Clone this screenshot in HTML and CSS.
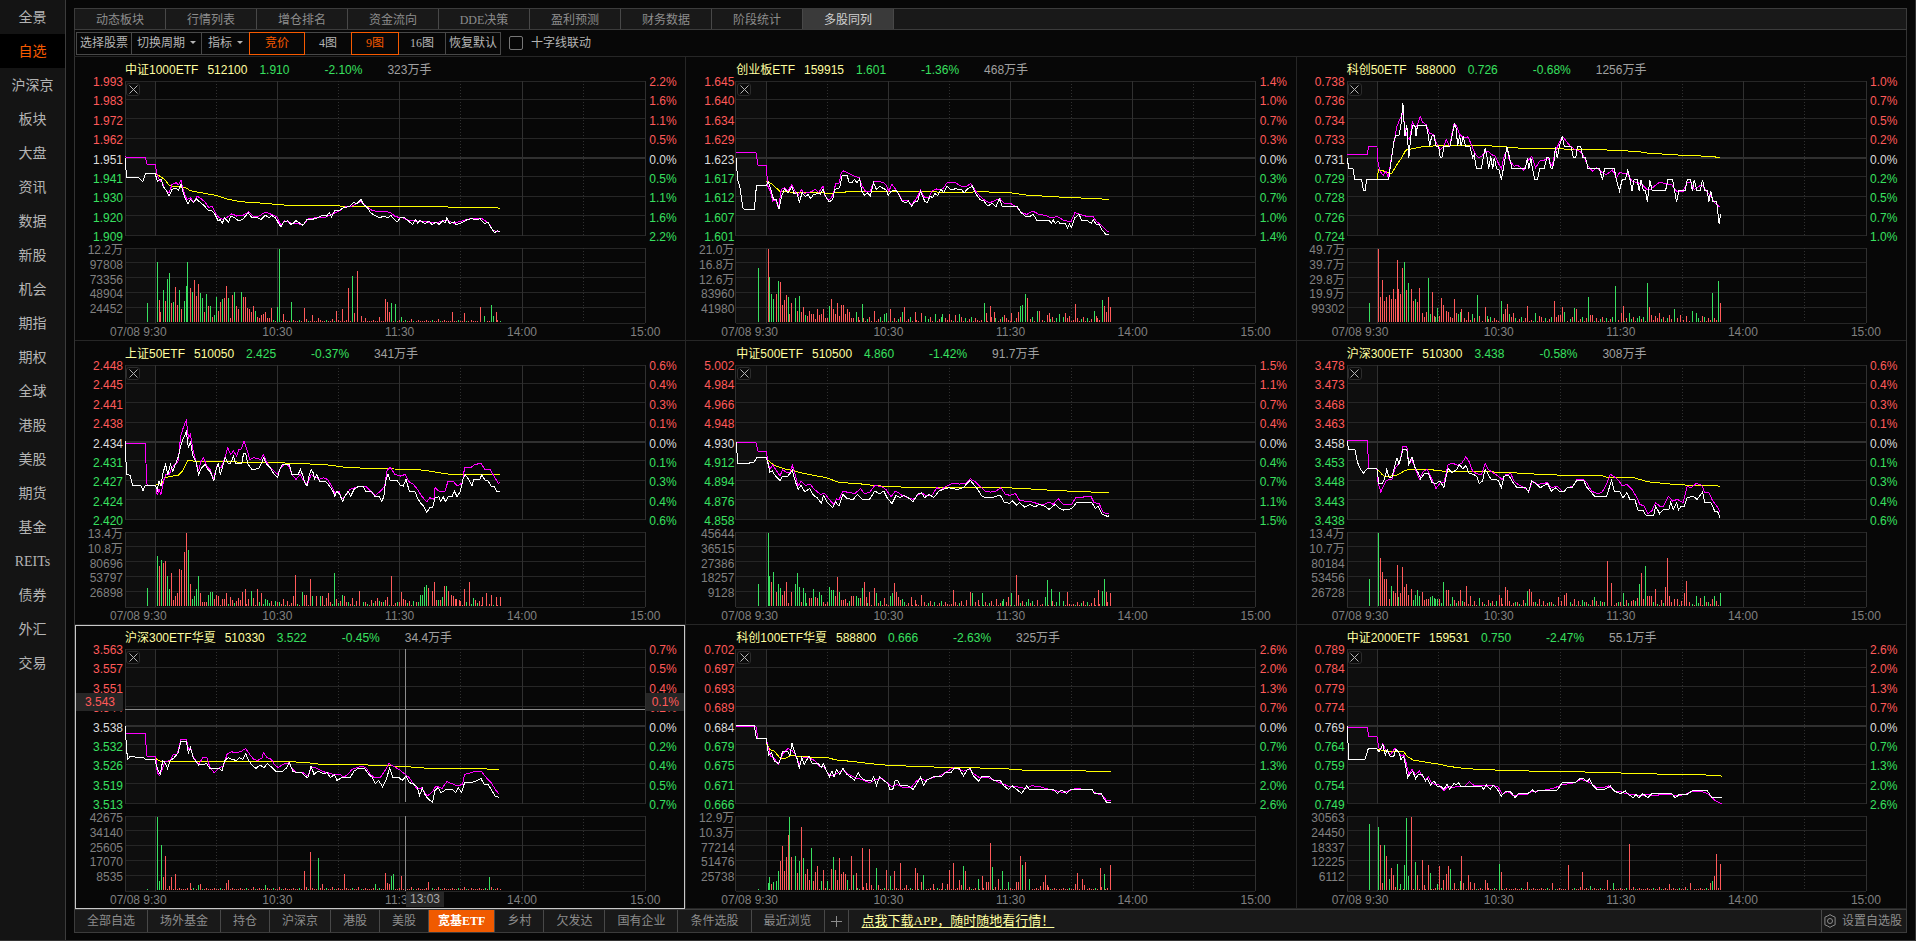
FILE: index.html
```
<!DOCTYPE html>
<html lang="zh-CN">
<head>
<meta charset="utf-8">
<title>多股同列</title>
<link rel="stylesheet" href="styles.css">
</head>
<body>
<div class="app">
  <nav class="side">
    <a href="#">全景</a>
    <a href="#" class="current">自选</a>
    <a href="#">沪深京</a>
    <a href="#">板块</a>
    <a href="#">大盘</a>
    <a href="#">资讯</a>
    <a href="#">数据</a>
    <a href="#">新股</a>
    <a href="#">机会</a>
    <a href="#">期指</a>
    <a href="#">期权</a>
    <a href="#">全球</a>
    <a href="#">港股</a>
    <a href="#">美股</a>
    <a href="#">期货</a>
    <a href="#">基金</a>
    <a href="#">REITs</a>
    <a href="#">债券</a>
    <a href="#">外汇</a>
    <a href="#">交易</a>
  </nav>
  <main class="main">
    <div class="tabs">
      <button type="button">动态板块</button>
      <button type="button">行情列表</button>
      <button type="button">增仓排名</button>
      <button type="button">资金流向</button>
      <button type="button">DDE决策</button>
      <button type="button">盈利预测</button>
      <button type="button">财务数据</button>
      <button type="button">阶段统计</button>
      <button type="button" class="current">多股同列</button>
    </div>
    <div class="tools">
      <button type="button" class="w4">选择股票</button>
      <button type="button" class="menu w5" aria-haspopup="true">切换周期</button>
      <button type="button" class="menu w3" aria-haspopup="true">指标</button>
      <button type="button" class="w4 on">竞价</button>
      <button type="button" class="w3">4图</button>
      <button type="button" class="w3 on">9图</button>
      <button type="button" class="w3">16图</button>
      <button type="button" class="w4">恢复默认</button>
      <label class="link-cross"><input type="checkbox">十字线联动</label>
    </div>
    <div class="panels" id="panels"></div>
    <div class="groups">
      <button type="button">全部自选</button>
      <button type="button">场外基金</button>
      <button type="button">持仓</button>
      <button type="button">沪深京</button>
      <button type="button">港股</button>
      <button type="button">美股</button>
      <button type="button" class="current">宽基ETF</button>
      <button type="button">乡村</button>
      <button type="button">欠发达</button>
      <button type="button">国有企业</button>
      <button type="button">条件选股</button>
      <button type="button">最近浏览</button>
      <button type="button" class="add" aria-label="添加">
        <svg width="11" height="11" viewBox="0 0 11 11"><path d="M5.5 0v11M0 5.5h11"/></svg>
      </button>
      <a class="promo" href="#">点我下载APP，随时随地看行情！</a>
      <button type="button" class="setup">
        <svg width="14" height="14" viewBox="0 0 14 14"><path d="M7 .6l2.200 1.300 2.900 1.300v7.600l-2.900 1.300L7 13.400l-2.200-1.300-2.900-1.300V3.200l2.900-1.300z"/><circle cx="7" cy="7" r="2.500"/></svg>
        设置自选股
      </button>
    </div>
  </main>
</div>
<script src="charts.js"></script>
</body>
</html>
```

FILE: styles.css
```
* { box-sizing: border-box; }

body {
  margin: 0;
  background: #070707;
  color: #b4b4b4;
  font: 12px/14px "Liberation Serif", "Noto Sans CJK SC", serif;
}

button {
  margin: 0;
  padding: 0;
  border: 0;
  background: none;
  color: inherit;
  font: inherit;
  white-space: nowrap;
  cursor: pointer;
}

a { color: inherit; text-decoration: none; }

.app {
  display: flex;
  height: 100vh;
  min-height: 740px;
  border-right: 1px solid #333;
  border-bottom: 1px solid #333;
}

/* left navigation */
.side {
  flex: none;
  width: 66px;
  background: #141414;
  border-right: 1px solid #3c3c3c;
}
.side a {
  display: flex;
  align-items: center;
  justify-content: center;
  height: 34px;
  padding-top: 2px;
  font-size: 14px;
}
.side .current { background: #000; color: #f75a00; }

.main {
  flex: 1;
  min-width: 0;
  display: flex;
  flex-direction: column;
  padding: 8px 8px 7px;
}

/* top tabs */
.tabs {
  display: flex;
  flex: none;
  height: 22px;
  border: 1px solid #3c3c3c;
  background: #191919;
  color: #8c8c8c;
}
.tabs button { width: 91px; padding-top: 2px; border-right: 1px solid #484848; }
.tabs .current { background: #3a3a3a; color: #d0d0d0; }

/* toolbar */
.tools {
  display: flex;
  flex: none;
  align-items: center;
  height: 26px;
  padding-left: 1px;
  border-left: 1px solid #333;
  border-right: 1px solid #333;
}
.tools button {
  height: 23px;
  margin-right: -1px;
  border: 1px solid #484848;
}
.tools .on { position: relative; border-color: #f75a00; color: #f75a00; }
.w3 { width: 48px; }
.w4 { width: 56px; }
.w5 { width: 71px; }
.tools .menu.w3 { width: 49px; }
.menu::after {
  content: "";
  display: inline-block;
  margin-left: 5px;
  vertical-align: 3px;
  border: 3px solid transparent;
  border-top-color: #b4b4b4;
  border-bottom: 0;
}
.link-cross { display: flex; align-items: center; gap: 8px; margin-left: 9px; }
.link-cross input {
  appearance: none;
  width: 14px;
  height: 14px;
  margin: 0;
  border: 1px solid #777;
  border-radius: 2px;
}
.link-cross input:checked { background: #f75a00; }

/* chart panels */
.panels {
  flex: 1;
  display: grid;
  grid-template-columns: repeat(3, 1fr);
  grid-template-rows: repeat(3, 1fr);
  border: 1px solid #262626;
  border-bottom: 0;
  border-left-color: #333;
  border-right-color: #333;
  font-family: "Liberation Sans", "Noto Sans CJK SC", sans-serif;
}
.panel {
  display: grid;
  grid-template-columns: 50px 1fr 40px;
  grid-template-rows: 24px 155fr 12px 75fr 17px;
  min-width: 0;
  border-left: 1px solid #262626;
  border-bottom: 1px solid #262626;
}
.panel:nth-child(3n + 1) { border-left: 0; }
.panel.selected { outline: 1px solid #c8c8c8; outline-offset: -1px; border-bottom-color: #c8c8c8; }

.quote {
  grid-column: 2 / 4;
  display: flex;
  align-items: center;
  height: 26px;
  white-space: nowrap;
}
.quote .name, .quote .code { color: #ffffa0; }
.quote .name { margin-right: 9px; }
.quote .code { margin-right: 12px; }
.quote .price { width: 65px; color: #38e060; }
.quote .change { width: 63px; color: #38e060; }
.quote .volume { color: #a0a0a0; }

.scale {
  position: relative;
  display: flex;
  flex-direction: column;
  justify-content: space-between;
  margin: -6px 0 -8px;
  color: #38e060;
}
.scale.left { grid-column: 1; padding-right: 2px; text-align: right; }
.scale.right { padding-left: 4px; }
.scale .up { color: #ff5a5a; }
.scale .flat { color: #dcdcdc; }
.scale.amount { margin: -5px 0 7px; color: #808080; }

.plot { position: relative; min-width: 0; min-height: 0; }
.plot svg { display: block; position: absolute; inset: 0; width: 100%; height: 100%; overflow: visible; }
.plot.trade { grid-column: 2; grid-row: 4; }
.scale.amount { grid-row: 4; }

.plot svg * { vector-effect: non-scaling-stroke; shape-rendering: crispEdges; fill: none; stroke-width: 1px; }
.plot svg .early { fill: #0e0e0e; }
.plot svg .rule { stroke: #262626; }
.plot svg .hour { stroke: #303030; }
.plot svg .half { stroke: #303030; stroke-dasharray: 1 2; }
.plot svg .base { stroke: #303030; stroke-width: 2px; }
.plot svg .cross { stroke: #8c8c8c; }
.plot svg .lead { stroke: #ff00ff; }
.plot svg .mean { stroke: #ffff00; }
.plot svg .last { stroke: #ffffff; }
.plot svg .bar-up { stroke: #ff5a5a; }
.plot svg .bar-down { stroke: #38e060; }

.close {
  position: absolute;
  top: 2px;
  left: 1px;
  display: flex;
  align-items: center;
  justify-content: center;
  width: 14px;
  height: 13px;
  border: 1px solid #2c2c2c;
  border-radius: 3px;
  background: #0a0a0a;
}
.plot .close svg { position: static; width: 9px; height: 9px; }
.plot .close svg path { stroke: #b4b4b4; shape-rendering: auto; }

.times {
  grid-column: 2;
  grid-row: 5;
  position: relative;
  display: grid;
  grid-template-columns: 91fr 122fr 122fr 122fr 62fr;
  align-items: center;
  justify-items: center;
  padding-top: 1px;
  color: #808080;
  white-space: nowrap;
}
.times span:first-child { justify-self: start; margin-left: -15px; }
.times span:nth-child(5) { justify-self: end; margin-right: -15px; }

.tag {
  position: absolute;
  background: #262626;
  line-height: 18px;
}
.scale .tag { bottom: 60%; color: #ff5a5a; text-align: center; }
.scale.left .tag { left: 1px; width: 47px; padding-right: 8px; text-align: right; }
.scale.right .tag { right: 1px; width: 38px; }
.times .tag { left: 54%; top: 0; width: 38px; color: #a8a8a8; line-height: 16px; text-align: center; }

/* bottom groups */
.groups {
  display: flex;
  flex: none;
  height: 24px;
  border: 1px solid #3c3c3c;
  background: #191919;
  color: #8c8c8c;
}
.groups button { padding: 0 12px; border-right: 1px solid #484848; }
.groups .current { padding: 0 9px; background: #f05a00; color: #fff; font-weight: bold; }
.groups .add { padding: 0 6px; }
.groups svg { fill: none; stroke: #8c8c8c; }
.add svg { display: block; }
.promo {
  align-self: center;
  margin-left: 13px;
  color: #ffffa0;
  font-size: 13px;
  text-decoration: underline;
  text-underline-offset: 2px;
}
.groups .setup {
  display: flex;
  align-items: center;
  gap: 5px;
  margin-left: auto;
  padding: 0 4px 0 1px;
  border-right: 0;
  border-left: 1px solid #484848;
}
```

FILE: charts.js
```
// Each plot has its own unit box: left, top, width. Bars are "x:height", negative for a falling minute.
const panels = [
  {
    name: "中证1000ETF", code: "512100", price: "1.910", change: "-2.10%", volume: "323万手",
    prices: "1.993 1.983 1.972 1.962 1.951 1.941 1.930 1.920 1.909", rates: "2.2 1.6 1.1 0.5",
    amounts: "12.2万 97808 73356 48904 24452", box: [307, 244, 1272], hum: 1,
    lead: "307,470 311,475 357,475 361,495 381,495 386,530 392,543 398,548 405,570 415,580 422,555 432,550 438,556 444,543 450,575 458,600 467,595 475,608 483,590 493,598 503,608 512,625 520,620 530,645 537,655 545,660 555,655 568,643 580,650 595,648 610,637 620,650 635,650 650,638 665,645 678,652 688,678 697,665 715,672 730,673 742,678 755,658 775,655 795,655 812,645 830,635 845,622 862,620 875,612 884,606 895,620 910,632 925,637 955,638 968,652 985,655 1000,663 1015,665 1035,665 1055,670 1075,668 1094,662 1110,672 1130,665 1150,658 1180,658 1195,670 1205,690 1212,696 1222,696",
    mean: "381,523 395,532 405,542 415,558 430,562 455,564 465,573 485,578 530,588 560,600 590,607 650,612 715,619 860,620 950,622 1120,623 1224,626",
    last: "307,475 311,535 341,535 350,547 357,523 381,523 386,545 395,538 400,560 407,572 415,589 422,570 432,566 438,572 444,553 448,575 455,600 461,612 467,600 475,610 481,598 490,608 500,618 510,632 518,632 527,645 535,665 540,660 545,672 550,655 560,668 566,650 575,655 585,665 595,660 608,640 617,655 630,655 640,660 650,648 660,655 665,648 675,655 682,672 688,682 695,668 705,664 712,675 718,672 725,664 735,672 742,678 752,660 765,660 778,655 790,648 800,650 806,640 812,652 820,632 830,635 840,625 855,622 865,610 875,612 884,600 890,615 900,625 907,640 920,650 930,655 940,650 950,655 957,648 965,660 972,668 980,655 990,655 1000,665 1010,675 1018,660 1023,672 1028,662 1040,673 1050,665 1058,676 1067,668 1075,675 1083,665 1090,670 1094,655 1100,672 1112,668 1116,676 1130,670 1145,660 1155,658 1165,662 1175,658 1185,672 1195,670 1202,685 1210,700 1218,694 1224,698",
    bars: "361:-54 386:-177 391:63 395:30 400:-93 405:60 410:-126 415:-144 420:54 425:-57 430:102 435:48 440:-93 445:36 452:-60 457:-105 461:-177 466:99 471:-87 476:123 481:75 486:111 491:-84 496:-69 501:30 506:-81 511:45 516:-45 520:15 525:-21 530:-72 535:33 540:57 545:-66 550:69 555:105 560:-69 565:12 570:78 575:-87 580:45 585:36 591:-87 596:72 601:72 606:39 611:36 616:30 621:45 626:-33 631:15 636:12 641:21 646:24 650:30 655:12 660:12 665:39 680:-42 685:-216 695:24 714:-57 746:39 765:21 780:12 824:33 839:36 854:99 864:-135 869:27 876:150 885:18 895:12 930:15 944:66 949:57 954:30 959:-54 969:-51 983:-15 1108:30 1138:27 1175:42 1185:-18 1204:-48 1209:-18 1214:30 1224:-3"
  },
  {
    name: "创业板ETF", code: "159915", price: "1.601", change: "-1.36%", volume: "468万手",
    prices: "1.645 1.640 1.634 1.629 1.623 1.617 1.612 1.607 1.601", rates: "1.4 1.0 0.7 0.3",
    amounts: "21.0万 16.8万 12.6万 83960 41980", box: [138, 244, 1272], hum: 2,
    lead: "138,460 187,460 192,498 212,498 216,560 222,575 228,605 235,600 242,628 249,570 256,565 265,575 275,555 283,575 290,590 298,570 305,582 318,578 325,575 332,570 340,580 351,560 356,590 365,602 372,595 378,575 382,553 390,553 396,520 402,514 415,522 428,530 440,535 447,560 455,575 467,575 475,548 487,545 500,550 505,555 512,575 520,555 530,572 540,590 545,602 560,605 568,615 580,598 590,572 600,595 610,595 618,575 628,568 635,572 645,568 655,550 675,550 690,560 700,562 713,553 725,575 735,590 750,605 760,610 775,602 785,598 795,612 810,612 825,622 838,640 850,645 865,635 880,645 895,648 910,655 925,652 940,662 958,668 968,640 980,645 1000,652 1012,650 1020,665 1035,680 1047,695 1052,695",
    mean: "212,545 225,553 237,566 246,577 280,578 300,580 370,581 395,580 410,577 600,577 680,579 740,577 810,580 850,587 905,591 960,595 1020,597 1052,601",
    last: "138,475 142,540 147,560 155,625 160,631 183,631 188,559 212,559 217,548 222,565 230,600 237,600 243,630 250,590 257,568 265,580 275,562 280,582 287,580 293,608 300,580 308,592 315,585 321,598 328,585 340,582 345,585 351,570 357,590 366,608 375,600 380,570 386,568 392,565 398,527 410,527 415,548 423,548 428,540 434,550 441,538 446,575 453,588 460,580 467,590 475,550 482,570 490,560 500,568 505,570 511,588 518,575 530,572 537,585 545,605 553,610 560,605 568,620 575,608 583,605 590,575 600,605 607,610 613,590 620,595 625,582 632,588 640,570 647,580 655,560 665,572 675,568 690,570 697,580 705,568 717,560 725,582 735,600 745,605 755,620 765,612 775,622 783,598 790,620 827,622 835,638 848,652 857,652 866,645 875,663 905,663 910,672 915,662 920,673 927,665 932,673 945,673 950,685 955,675 960,684 968,655 978,645 985,663 1000,665 1008,672 1013,660 1020,675 1027,675 1035,693 1045,706 1052,706",
    bars: "192:-159 217:216 221:-132 226:-81 231:-66 236:81 241:-120 246:117 251:48 256:63 261:78 266:-72 270:24 275:54 283:-69 288:33 293:-75 298:30 303:42 308:-21 313:18 317:33 322:24 327:24 332:9 337:36 342:21 347:24 352:36 357:12 361:12 366:-45 371:66 376:36 381:24 386:54 391:18 396:48 401:48 406:24 411:36 416:30 422:12 427:12 432:-30 437:15 447:-51 477:33 502:-24 507:-27 516:36 545:-30 550:42 577:30 592:27 602:-18 626:-24 645:-24 660:24 675:21 685:-24 746:-54 751:27 761:45 771:30 795:21 814:27 829:30 834:-45 839:-48 846:-81 851:69 876:-33 881:33 900:21 905:27 931:-24 945:27 954:18 970:51 1015:-33 1020:18 1035:-63 1040:45 1045:30 1050:72 1055:42"
  },
  {
    name: "科创50ETF", code: "588000", price: "0.726", change: "-0.68%", volume: "1256万手",
    prices: "0.738 0.736 0.734 0.733 0.731 0.729 0.728 0.726 0.724", rates: "1.0 0.7 0.5 0.2",
    amounts: "49.7万 39.7万 29.8万 19.9万 99302", box: [121, 244, 1319], hum: 2,
    lead: "121,464 172,464 177,440 197,440 200,490 205,515 213,528 220,515 226,535 233,480 240,430 248,380 255,360 263,340 268,385 275,415 280,420 287,368 295,385 302,370 307,350 313,368 322,375 330,400 340,405 350,435 358,450 367,440 373,420 382,440 388,400 393,372 400,380 405,400 412,410 420,415 428,412 437,435 445,460 455,475 463,470 470,460 480,455 488,465 497,470 505,490 513,508 520,470 528,450 533,480 545,500 555,498 570,512 580,485 590,470 600,505 610,485 622,482 632,475 642,500 650,455 658,435 668,410 678,425 688,440 700,450 712,455 722,470 733,500 745,515 755,505 770,520 780,525 795,512 805,535 813,520 832,522 845,545 860,550 870,555 885,572 892,570 902,560 915,548 930,553 945,555 958,575 975,575 985,548 995,550 1003,570 1015,560 1024,558 1035,578 1045,590 1055,610 1068,623",
    mean: "197,541 201,510 215,515 235,522 245,500 260,475 270,452 290,447 320,440 390,438 440,438 510,440 545,445 610,448 740,449 860,456 885,461 970,467 1050,471 1068,475",
    last: "121,475 126,508 136,508 141,541 158,541 163,574 167,574 171,541 227,541 231,500 235,470 240,425 245,408 253,408 258,375 263,311 268,410 273,378 278,475 283,410 288,377 294,380 296,410 300,377 322,377 328,410 331,440 336,410 342,408 347,440 354,442 358,475 362,475 367,442 382,442 388,408 394,374 398,385 402,438 407,408 411,438 416,410 422,440 433,440 440,475 444,465 450,508 462,508 467,475 472,445 477,475 481,508 486,470 491,508 495,475 501,508 507,510 513,541 518,508 522,480 527,442 534,475 540,508 574,508 579,475 583,508 588,475 592,508 598,541 605,541 610,508 622,508 628,475 634,475 638,505 643,508 648,475 650,442 655,475 660,442 668,410 673,442 690,442 696,475 702,475 706,442 715,442 720,475 727,475 733,508 762,508 770,541 775,508 800,508 805,541 813,574 820,541 828,541 834,510 840,541 845,574 850,541 858,541 863,574 868,541 874,574 879,574 884,607 890,541 896,574 930,574 936,541 948,541 953,574 958,607 964,574 980,574 985,541 994,541 998,574 1003,541 1010,574 1018,574 1024,541 1030,574 1036,574 1040,607 1045,574 1050,607 1060,607 1063,640 1066,673 1070,645",
    bars: "177:-54 202:216 207:72 212:123 217:60 222:72 228:78 233:66 238:96 243:66 248:183 253:96 258:81 263:159 268:-177 273:93 278:-114 286:96 291:60 296:-66 301:57 306:99 312:27 317:15 322:30 327:-129 332:-24 337:87 342:18 347:-15 352:-39 357:18 362:69 367:48 373:33 378:30 388:12 393:66 398:27 403:-24 408:-30 413:36 429:30 439:-24 452:-78 457:18 472:42 477:-18 513:-60 518:24 523:36 528:51 533:-24 543:27 579:45 599:-27 610:18 648:60 653:15 658:21 663:21 668:42 674:-30 699:-39 704:36 734:-72 739:21 744:21 803:-105 818:27 823:45 838:-27 864:-18 884:-114 889:42 894:21 905:18 915:27 940:21 953:-36 969:21 984:18 999:-33 1009:-27 1024:18 1050:-84 1055:12 1060:6 1065:-120 1070:54"
  },
  {
    name: "上证50ETF", code: "510050", price: "2.425", change: "-0.37%", volume: "341万手",
    prices: "2.448 2.445 2.441 2.438 2.434 2.431 2.427 2.424 2.420", rates: "0.6 0.4 0.3 0.1",
    amounts: "13.4万 10.8万 80696 53797 26898", box: [160, 76, 1272], hum: 3,
    lead: "160,313 209,313 214,438 235,438 239,468 243,450 248,465 254,425 260,405 268,405 275,385 290,365 296,290 303,262 310,242 315,295 320,285 326,330 333,365 340,395 345,368 352,355 360,380 368,390 376,420 385,380 395,385 403,360 411,325 418,345 425,335 433,350 438,330 445,328 451,304 458,330 465,360 475,355 485,358 492,360 498,345 505,365 515,385 525,395 533,405 540,385 550,375 560,378 568,405 578,420 588,405 600,430 607,432 615,405 625,412 633,420 645,415 655,420 665,440 673,462 683,455 690,480 698,470 710,450 722,445 735,440 748,440 760,455 772,468 785,455 795,440 800,395 808,383 820,405 833,410 845,405 855,428 865,435 875,450 885,470 898,488 905,475 915,480 918,445 930,458 942,455 950,425 962,425 972,440 985,430 990,385 1005,385 1015,375 1030,372 1040,390 1052,390 1062,410 1073,432 1076,430",
    mean: "235,437 250,430 258,415 275,410 290,408 300,395 313,364 355,366 450,368 500,370 575,371 660,377 700,384 760,387 830,389 890,392 930,400 960,406 1076,406",
    last: "160,305 164,405 173,408 178,437 200,440 204,454 209,439 235,439 239,452 243,425 248,440 253,400 259,375 265,405 271,375 277,395 283,375 291,350 297,315 303,295 310,277 315,325 320,305 326,350 333,365 340,405 347,385 356,375 363,390 369,398 377,424 383,390 388,370 393,405 399,380 405,355 412,372 418,372 425,350 430,373 445,373 450,342 455,342 460,372 470,390 487,388 493,372 499,355 505,372 515,385 522,400 533,415 538,390 545,375 562,375 568,405 583,405 589,390 595,410 600,430 605,440 610,410 615,390 620,400 623,420 629,405 635,425 650,425 660,440 668,455 673,470 678,455 685,465 692,486 698,470 705,455 712,470 720,450 732,440 742,440 748,455 762,455 770,470 782,472 788,487 793,470 797,425 803,405 808,422 825,422 833,438 840,440 847,420 855,455 868,455 875,475 882,490 890,500 898,519 905,505 912,505 918,475 927,472 932,487 938,472 943,487 950,472 960,470 965,455 972,472 980,455 987,415 992,407 1000,420 1008,440 1013,420 1027,420 1032,407 1040,422 1048,425 1055,440 1062,440 1068,455 1076,455",
    bars: "214:-51 239:-147 244:117 249:-135 254:126 259:132 264:-87 268:-48 273:96 278:18 283:30 288:36 293:108 298:105 305:159 310:216 315:-165 320:63 325:-21 330:-30 335:-48 340:-87 345:36 350:12 355:12 360:12 365:-33 369:-39 374:-39 384:33 389:30 399:21 404:21 409:36 419:27 424:18 438:24 443:18 448:39 454:48 469:-42 474:24 484:48 494:36 504:-21 509:-18 572:30 577:90 594:-39 599:33 604:33 613:78 619:-30 629:30 638:-30 643:30 653:24 658:36 672:-96 677:21 692:-33 697:30 717:24 734:42 778:24 797:18 802:27 812:87 836:39 841:21 882:-33 887:-33 892:-54 898:-60 903:51 912:42 917:69 922:18 927:-18 937:-27 942:57 947:-57 952:42 957:33 962:30 967:21 977:18 990:48 1001:69 1011:-24 1035:27 1043:36 1057:33 1067:27 1077:27"
  },
  {
    name: "中证500ETF", code: "510500", price: "4.860", change: "-1.42%", volume: "91.7万手",
    prices: "5.002 4.984 4.966 4.948 4.930 4.912 4.894 4.876 4.858", rates: "1.5 1.1 0.7 0.4",
    amounts: "45644 36515 27386 18257 9128", box: [138, 76, 1272], hum: 2,
    lead: "138,310 187,310 192,335 212,335 216,365 221,390 228,375 235,390 246,410 252,390 260,398 270,400 276,378 283,405 290,440 298,425 308,438 320,435 330,450 345,465 355,462 365,478 377,495 385,478 390,482 400,455 415,460 430,462 443,447 452,462 465,460 478,438 495,442 505,450 518,472 528,455 538,462 545,468 560,475 572,480 583,468 592,460 605,470 618,468 630,445 640,450 655,440 668,432 685,434 700,432 712,418 725,428 735,440 748,455 762,458 775,455 787,445 798,465 810,468 822,462 832,482 845,485 860,487 875,492 890,497 905,488 915,495 927,478 940,495 960,495 970,475 985,475 995,470 1008,472 1015,490 1027,492 1038,520 1052,523",
    mean: "212,355 225,372 237,380 255,388 275,392 300,401 360,415 390,429 440,433 480,439 560,444 730,444 800,445 850,448 915,453 990,457 1052,460",
    last: "138,307 143,373 168,373 175,368 182,368 189,355 212,355 216,370 221,398 227,395 235,410 246,423 252,410 265,410 276,393 283,425 290,450 297,438 307,458 318,447 328,468 337,475 347,492 352,468 362,490 375,505 382,488 390,500 400,465 410,478 425,480 435,465 447,480 465,480 478,455 490,463 500,455 508,475 520,493 530,468 540,475 550,468 560,475 572,487 582,465 592,460 600,475 612,465 622,475 635,455 645,450 660,445 680,450 695,445 705,430 712,423 720,435 730,450 740,470 750,475 765,475 785,467 795,488 808,492 815,485 825,497 832,490 845,503 858,495 870,503 880,495 893,500 905,510 920,495 930,507 940,512 960,508 972,490 1010,490 1018,507 1025,500 1035,525 1050,532 1052,528",
    bars: "192:-63 217:-216 221:-87 226:69 231:-99 236:39 241:-63 246:-51 251:33 256:42 261:69 266:9 275:39 283:-63 288:-96 293:-54 298:12 303:-51 308:-36 317:24 322:24 327:-48 332:27 337:24 342:-39 347:-33 361:12 366:-54 371:-45 376:-45 381:30 386:84 391:-39 396:18 401:18 406:21 422:30 427:30 432:-30 437:-24 442:24 447:-51 452:69 457:27 466:39 477:51 482:-36 502:24 516:-30 521:-36 525:66 530:39 535:27 540:18 545:-21 567:27 577:18 592:33 670:45 702:18 712:39 717:-36 731:18 741:-36 775:21 794:-21 805:27 814:-36 824:90 829:33 855:-21 876:18 895:-27 900:-75 910:-48 931:-39 949:39 1015:24 1025:45 1035:-42 1040:-78 1045:39 1055:36"
  },
  {
    name: "沪深300ETF", code: "510300", price: "3.438", change: "-0.58%", volume: "308万手",
    prices: "3.478 3.473 3.468 3.463 3.458 3.453 3.448 3.443 3.438", rates: "0.6 0.4 0.3 0.1",
    amounts: "13.4万 10.7万 80184 53456 26728", box: [121, 76, 1319], hum: 3,
    lead: "121,304 172,304 177,388 197,388 200,430 207,458 213,440 220,425 228,420 235,420 242,390 250,375 257,358 263,322 273,322 278,375 286,360 295,390 305,420 315,395 325,390 335,415 347,447 358,430 367,430 378,375 390,372 402,377 412,372 423,352 432,368 440,395 450,403 463,405 472,372 480,390 492,400 505,410 515,420 525,405 537,403 545,425 555,435 570,445 583,455 592,425 605,435 618,432 630,430 640,445 655,440 670,458 680,445 695,440 705,420 722,420 730,430 742,455 755,462 768,460 778,440 790,405 800,412 812,425 820,440 832,435 845,450 855,470 865,495 875,500 885,523 895,515 905,490 915,500 925,500 937,470 948,485 960,480 975,490 985,440 995,445 1008,432 1022,438 1030,460 1040,460 1050,485 1060,500 1068,517",
    mean: "197,388 210,405 218,412 245,408 262,398 270,392 300,389 345,392 375,397 440,397 515,398 600,404 680,408 770,409 785,415 850,415 885,427 960,436 1010,438 1068,440",
    last: "121,305 126,331 141,331 148,370 156,390 163,401 172,388 197,388 202,432 210,433 216,420 222,390 228,415 235,415 242,380 248,355 253,375 263,331 273,331 278,375 286,352 294,385 302,400 308,418 318,402 328,402 337,430 347,432 357,425 367,445 373,410 378,388 388,400 400,390 407,375 415,388 423,378 430,400 442,405 450,410 457,432 465,425 472,390 480,405 487,420 505,422 513,445 520,410 532,408 543,430 553,445 575,445 582,458 590,425 600,432 612,445 630,432 640,455 650,445 660,455 672,458 680,445 692,445 705,422 722,422 728,440 738,455 750,470 760,470 770,470 780,472 793,422 800,455 815,458 822,475 832,460 840,482 852,480 860,512 872,512 880,527 900,527 905,500 915,523 925,510 938,512 943,490 950,510 958,490 963,512 970,500 978,500 985,475 1000,470 1010,480 1024,458 1030,490 1045,490 1055,515 1062,515 1068,535",
    bars: "177:-78 202:-216 207:141 212:99 217:78 222:78 228:21 233:-57 238:42 243:36 248:120 253:-27 258:36 263:114 268:54 273:63 278:33 286:48 291:-18 296:-33 301:-45 306:-30 312:39 317:18 322:21 327:21 332:-27 337:-30 342:-24 347:-21 352:-21 357:21 362:-9 367:-69 373:45 378:45 388:-27 408:45 424:57 434:30 457:-24 508:33 513:24 523:54 528:45 579:-42 584:48 589:39 609:21 658:27 674:33 679:36 719:-18 749:-27 782:132 793:66 823:-36 848:18 858:24 864:-63 869:96 879:-117 884:30 889:30 894:30 905:48 930:54 935:141 940:30 953:21 978:36 984:72 1009:-30 1019:24 1029:-30 1055:-30 1070:-36"
  },
  {
    name: "沪深300ETF华夏", code: "510330", price: "3.522", change: "-0.45%", volume: "34.4万手",
    prices: "3.563 3.557 3.551 3.544 3.538 3.532 3.526 3.519 3.513", rates: "0.7 0.5 0.4 0.2",
    amounts: "42675 34140 25605 17070 8535", box: [160, 103, 1272], hum: 1,
    cursor: { x: 846, y: 286, price: "3.543", rate: "0.1%", time: "13:03" },
    lead: "160,358 209,358 214,427 235,427 239,475 245,484 252,460 258,440 265,440 272,435 278,420 287,420 293,395 297,374 310,374 315,405 320,400 328,430 340,450 350,430 360,430 368,460 378,475 390,460 400,455 410,418 420,412 432,415 445,410 455,402 465,420 475,435 485,438 495,430 498,415 508,430 518,435 525,450 535,460 545,450 560,445 570,465 580,475 595,475 607,485 617,458 630,462 645,472 655,475 670,480 685,480 695,488 705,480 715,465 735,457 748,458 760,480 770,490 785,488 795,470 805,447 815,455 830,465 845,480 855,490 865,508 875,525 885,520 898,545 910,535 920,515 935,522 947,502 960,508 972,515 985,510 990,480 1005,475 1018,470 1032,472 1042,488 1055,505 1067,528 1075,540",
    mean: "235,432 248,442 290,440 530,440 600,444 640,450 770,452 850,457 905,462 1060,464 1075,466",
    last: "160,334 166,435 172,427 205,429 210,435 233,436 240,465 246,480 252,440 257,443 264,462 270,440 280,430 290,415 297,380 310,380 315,415 320,400 327,430 340,452 360,448 367,462 390,462 397,470 403,440 412,430 422,435 432,438 440,430 448,435 455,418 462,437 470,452 480,462 490,452 500,460 508,447 518,458 530,472 545,472 555,460 562,445 570,470 580,475 590,473 600,485 607,490 615,455 622,480 632,470 645,478 655,475 662,490 672,480 678,498 690,490 710,490 720,470 730,462 745,462 755,478 765,490 772,508 780,498 790,518 797,500 807,462 815,490 830,490 838,498 847,485 855,505 865,508 875,520 880,543 887,522 893,540 900,552 912,565 917,530 925,520 933,535 945,525 960,525 968,535 975,520 983,535 990,505 1005,505 1018,500 1030,492 1038,510 1048,510 1055,525 1065,545 1075,550",
    bars: "214:-3 239:-216 244:-27 249:-132 254:36 259:99 264:3 268:12 273:36 278:3 283:45 320:21 340:-15 345:18 409:21 414:30 504:-15 599:54 613:111 633:-93 643:18 697:45 773:-18 797:48 802:21 807:18 812:-39 817:-45 836:39 903:24 1052:-36 1077:3"
  },
  {
    name: "科创100ETF华夏", code: "588800", price: "0.666", change: "-2.63%", volume: "325万手",
    prices: "0.702 0.697 0.693 0.689 0.684 0.679 0.675 0.671 0.666", rates: "2.6 2.0 1.3 0.7",
    amounts: "12.9万 10.3万 77214 51476 25738", box: [138, 103, 1272], hum: 1,
    lead: "138,337 187,337 192,373 212,373 216,395 223,425 230,430 242,448 250,425 258,410 266,402 275,408 283,420 293,450 302,430 317,430 330,438 342,455 352,455 365,480 375,485 385,478 400,465 412,478 430,490 445,495 465,505 482,495 495,492 508,505 520,518 532,510 545,518 568,518 580,500 590,492 600,498 620,490 635,485 650,475 670,460 685,465 695,470 710,465 722,480 735,490 755,490 775,500 790,508 805,515 822,515 835,520 850,522 862,514 885,518 905,525 925,530 940,535 955,528 970,522 990,525 1010,527 1020,538 1035,542 1045,558 1057,560",
    mean: "212,385 220,405 232,410 245,430 258,433 272,423 300,427 365,430 380,436 430,442 490,451 575,456 680,460 750,461 830,465 850,469 1030,470 1057,472",
    last: "138,334 183,334 188,373 212,373 218,423 225,415 232,440 243,448 252,412 265,412 270,425 275,385 281,412 287,430 293,462 299,430 305,450 317,425 325,448 340,448 347,460 352,448 360,470 367,487 373,470 378,487 384,465 392,480 400,462 408,478 418,487 428,497 437,475 445,490 455,498 470,500 475,488 482,513 490,488 500,498 510,508 515,525 522,525 528,498 535,500 540,513 560,515 572,525 580,510 590,488 597,513 605,498 620,488 642,486 650,475 665,475 672,461 685,463 695,485 705,465 712,463 720,485 732,500 740,487 760,487 768,498 785,498 795,515 805,525 815,515 825,525 838,537 850,515 857,525 915,525 925,537 935,527 948,537 957,525 1010,525 1015,537 1033,538 1040,555 1047,565 1057,565",
    bars: "192:-3 217:-21 221:-36 226:18 231:-24 236:-27 241:-54 246:84 251:129 256:54 261:96 266:162 270:-216 275:96 283:-99 288:48 293:-84 298:186 303:-93 308:45 313:60 317:30 322:-123 327:27 332:51 337:69 347:-27 352:57 362:-27 371:60 376:-96 381:57 386:30 391:93 396:45 401:51 406:45 411:-30 422:99 427:-42 432:48 447:123 457:21 466:120 471:15 482:-63 487:15 507:57 516:-39 526:54 540:78 555:15 577:63 582:48 592:24 597:-42 621:18 645:21 655:18 660:57 670:78 685:30 690:15 695:-69 700:54 731:-33 741:39 751:24 756:24 761:138 766:-66 781:33 790:-54 805:-24 824:24 829:24 834:99 839:-72 846:81 856:-33 885:12 890:24 895:42 900:15 970:18 975:48 986:33 991:15 1030:63 1040:-45 1055:72"
  },
  {
    name: "中证2000ETF", code: "159531", price: "0.750", change: "-2.47%", volume: "55.1万手",
    prices: "0.789 0.784 0.779 0.774 0.769 0.764 0.759 0.754 0.749", rates: "2.6 2.0 1.3 0.7",
    amounts: "30563 24450 18337 12225 6112", box: [121, 103, 1319], hum: 1,
    lead: "121,340 172,340 177,367 197,367 202,400 207,405 212,387 218,405 225,412 232,420 243,400 250,410 258,425 265,420 270,440 278,480 286,465 295,480 305,470 312,485 320,495 328,488 335,505 345,510 355,512 367,530 378,515 390,520 402,515 418,518 432,502 445,515 460,512 475,515 490,512 505,518 515,540 530,532 545,545 560,540 575,542 590,532 605,530 625,527 645,522 665,512 685,508 700,505 715,495 730,500 742,508 755,520 770,520 785,515 800,530 815,530 828,538 845,540 865,545 885,540 900,545 920,540 940,540 960,545 980,540 1000,530 1020,530 1040,540 1055,558 1068,566 1073,566",
    mean: "197,404 220,410 265,412 275,427 290,437 330,445 360,450 380,456 425,463 520,468 625,471 790,474 850,478 990,480 1060,483 1073,485",
    last: "121,334 126,436 166,436 175,403 197,403 202,412 212,390 218,422 223,405 230,425 240,425 245,405 252,412 258,435 265,425 270,455 275,490 280,480 288,470 295,493 303,480 312,480 320,500 325,492 333,512 342,500 350,515 358,515 367,525 375,510 382,525 392,508 400,510 405,505 410,515 462,515 468,525 475,512 485,525 492,512 503,525 513,545 525,530 535,530 548,550 556,538 580,538 592,527 600,535 605,527 655,527 668,505 700,505 712,493 722,493 730,503 737,493 745,512 755,525 775,525 790,515 800,530 815,538 828,530 835,540 848,550 855,540 862,550 872,538 885,550 895,538 945,538 955,550 965,540 985,540 1000,527 1035,527 1048,550 1073,550",
    bars: "177:-195 202:-186 207:132 212:21 217:-132 222:99 228:-33 233:63 238:42 248:-75 258:-18 268:-72 273:-213 278:-39 286:216 296:-81 301:42 312:87 317:15 327:72 332:-48 352:-18 357:69 367:30 373:45 378:69 383:-60 393:21 408:-27 413:99 418:21 429:42 434:24 444:21 472:30 477:21 508:-75 513:51 579:24 643:21 684:72 719:51 739:-12 782:30 797:-21 838:135 940:18 994:21 1045:21 1050:-27 1055:39 1060:105 1070:75"
  }
];

const TALL = 466;
const SHORT = 222;
const FLOOR = 218;
const QUIET = {
  1: [3, 3, 6, 3, 3, -6, 3, 3, 9, -3, 3, 6, 3],
  2: [6, -3, 12, 3, -9, 15, 3, -12, 3, 9, -15, 3, 12, 6, 3],
  3: [12, -6, 3, 18, -9, 15, 3, -15, 12, -12, 6, 21, -3, 15, 3, 9, -12]
};

const line = (cls, x1, y1, x2, y2) =>
  `<line class="${cls}" x1="${x1}" y1="${y1}" x2="${x2}" y2="${y2}"/>`;

function grid(x, y, w, h, rows) {
  const at = (f) => x + (w * f) / 519;
  let out = `<rect class="early" x="${x}" y="${y}" width="${(w * 30) / 519}" height="${h}"/>`;
  rows.forEach((r) => { out += line("rule", x, y + r, x + w, y + r); });
  [91, 213, 335, 457].forEach((f) => { out += line("half", at(f), y, at(f), y + h); });
  [0, 30, 152, 274, 396, 519].forEach((f) => { out += line("hour", at(f), y, at(f), y + h); });
  return out;
}

function bars(p) {
  const step = (p.box[2] / 1272) * 4.98;
  const list = p.bars.split(" ").map((b) => b.split(":").map(Number));
  const start = list[1][0];
  const end = list[list.length - 1][0];
  const quiet = QUIET[p.hum];
  for (let x = start, i = 0; x < end; x += step, i++) {
    if (!list.some((b) => Math.abs(b[0] - x) < step * 0.7)) list.push([x, quiet[i % quiet.length]]);
  }
  return list.map(([x, h]) =>
    line(h < 0 ? "bar-down" : "bar-up", x, FLOOR - Math.abs(h), x, FLOOR)).join("");
}

function panel(p) {
  const [x, y, w] = p.box;
  const c = p.cursor;
  const tone = (i) => (i < 4 ? "up" : i === 4 ? "flat" : "down");
  const rates = p.rates.split(" ");
  const allRates = [...rates, "0.0", ...[...rates].reverse()];
  const spans = (list, suffix) =>
    list.map((t, i) => `<span class="${tone(i)}">${t}${suffix}</span>`).join("");
  const tag = (t) => (c ? `<span class="tag">${t}</span>` : "");

  return `
  <section class="panel${c ? " selected" : ""}">
    <header class="quote">
      <span class="name">${p.name}</span><span class="code">${p.code}</span>
      <span class="price">${p.price}</span><span class="change">${p.change}</span>
      <span class="volume">${p.volume}</span>
    </header>
    <div class="scale left">${spans(p.prices.split(" "), "")}${tag(c && c.price)}</div>
    <div class="plot">
      <svg viewBox="${x} ${y} ${w} ${TALL}" preserveAspectRatio="none">
        ${grid(x, y, w, TALL, [0, 57, 114, 174, 288, 348, 405, 465])}
        ${line("base", x, y + 230, x + w, y + 230)}
        ${c ? line("cross", x, c.y, x + w, c.y) + line("cross", c.x, y, c.x, y + TALL - 5) : ""}
        <polyline class="mean" points="${p.mean}"/>
        <polyline class="lead" points="${p.lead}"/>
        <polyline class="last" points="${p.last}"/>
      </svg>
      <button type="button" class="close" aria-label="关闭">
        <svg viewBox="0 0 9 9"><path d="M.5 .5l8 8M8.500 .5l-8 8"/></svg>
      </button>
    </div>
    <div class="scale right">${spans(allRates, "%")}${tag(c && c.rate)}</div>
    <div class="scale left amount">${p.amounts.split(" ").map((a) => `<span>${a}</span>`).join("")}</div>
    <div class="plot trade">
      <svg viewBox="${x} 0 ${w} ${SHORT}" preserveAspectRatio="none">
        ${grid(x, 0, w, SHORT, [0, 42, 87, 132, 177, 222])}
        ${bars(p)}
        ${c ? line("cross", c.x, 0, c.x, SHORT) : ""}
      </svg>
    </div>
    <div class="times">
      <span>07/08 9:30</span><span>10:30</span><span>11:30</span><span>14:00</span><span>15:00</span>
      ${tag(c && c.time)}
    </div>
  </section>`;
}

document.getElementById("panels").innerHTML = panels.map(panel).join("");
```
